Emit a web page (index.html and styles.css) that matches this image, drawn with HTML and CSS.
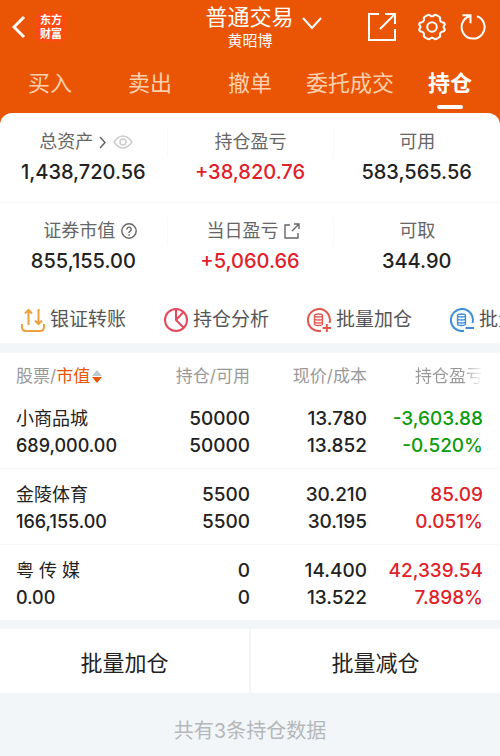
FILE: index.html
```html
<!DOCTYPE html>
<html lang="zh-CN">

<head>
    <meta charset="UTF-8">
    <meta name="viewport" content="width=device-width, initial-scale=1">
    <title>普通交易 - 持仓</title>
    <link rel="stylesheet" href="styles.css">
</head>

<body>
    <header class="header">
        <div class="topbar">
            <div class="topbar-left">
                <button class="icon-btn" aria-label="返回">
                    <svg width="14" height="24" viewBox="0 0 14 24"><path d="M12 2 2 12l10 10" stroke-width="3" /></svg>
                </button>
                <div class="logo">东方<br>财富</div>
            </div>
            <div class="title">
                <button class="title-btn">普通交易
                    <svg width="20" height="13" viewBox="0 0 20 13"><path d="m1 1 9 10 9-10" stroke-width="2" /></svg>
                </button>
                <div class="user">黄昭博</div>
            </div>
            <div class="topbar-right">
                <button class="icon-btn" aria-label="分享">
                    <svg width="28" height="28" viewBox="0 0 28 28"><path d="M11 1H1v26h26V16M17 1h10v10M26 2 12 16" stroke-width="2" /></svg>
                </button>
                <button class="icon-btn gear" aria-label="设置">
                    <svg width="28" height="28" viewBox="0 0 28 28">
                        <path d="M9.5 2.2 Q11 1 12 2.4 Q14 4.2 16 2.4 Q17 1 18.5 2.2 L21 3.6 Q22.6 4.4 22 6.2 Q21.8 8.8 24.8 9.6 Q26.8 9.7 26.8 11.5 L25.4 14 L26.8 16.5 Q26.8 18.3 24.8 18.4 Q21.8 19.2 22 21.8 Q22.6 23.6 21 24.4 L18.5 25.8 Q17 27 16 25.6 Q14 23.8 12 25.6 Q11 27 9.5 25.8 L7 24.4 Q5.4 23.6 6 21.8 Q6.2 19.2 3.2 18.4 Q1.2 18.3 1.2 16.5 L2.6 14 L1.2 11.5 Q1.2 9.7 3.2 9.6 Q6.2 8.8 6 6.2 Q5.4 4.4 7 3.6 Z" stroke-width="2" stroke-linejoin="round" />
                        <circle cx="14" cy="14" r="4.8" stroke-width="2" />
                    </svg>
                </button>
                <button class="icon-btn" aria-label="刷新">
                    <svg width="26" height="28" viewBox="0 0 26 28"><path d="M17 3.300A11.500 11.500 0 1 1 9.500 3.200M2.500 2.200h8v8" stroke-width="2" /></svg>
                </button>
            </div>
        </div>
        <nav class="tabs">
            <a href="#">买入</a>
            <a href="#">卖出</a>
            <a href="#">撤单</a>
            <a href="#">委托成交</a>
            <a href="#" class="active">持仓</a>
        </nav>
    </header>

    <main>
        <section class="account">
            <div class="summary">
                <div class="item">
                    <div class="label with-icon">总资产
                        <svg width="8" height="13" viewBox="0 0 8 13"><path d="m1 1 5 5.5L1 12" stroke-width="1.5" /></svg>
                        <svg class="eye" width="20" height="14" viewBox="0 0 20 14"><path d="M1 7q9-12 18 0-9 12-18 0z" stroke-width="1.5" /><circle cx="10" cy="7" r="3" stroke-width="1.5" /></svg>
                    </div>
                    <div class="value">1,438,720.56</div>
                </div>
                <div class="item">
                    <div class="label">持仓盈亏</div>
                    <div class="value red">+38,820.76</div>
                </div>
                <div class="item">
                    <div class="label">可用</div>
                    <div class="value">583,565.56</div>
                </div>
            </div>
            <div class="summary second">
                <div class="item">
                    <div class="label with-icon market">证券市值
                        <svg width="16" height="16" viewBox="0 0 16 16"><circle cx="8" cy="8" r="7.2" stroke-width="1.4" /><path d="M5.8 6.4a2.2 2.2 0 1 1 3.4 1.8Q8 9 8 10M8 11.3v1.4" stroke-width="1.4" /></svg>
                    </div>
                    <div class="value">855,155.00</div>
                </div>
                <div class="item">
                    <div class="label with-icon">当日盈亏
                        <svg width="16" height="16" viewBox="0 0 16 16"><path d="M6 2H1v13h13v-5M10 1h5v5M15 1 8 8" stroke-width="1.4" /></svg>
                    </div>
                    <div class="value red">+5,060.66</div>
                </div>
                <div class="item">
                    <div class="label">可取</div>
                    <div class="value">344.90</div>
                </div>
            </div>
            <div class="actions">
                <a href="#">
                    <svg class="orange" width="24" height="24" viewBox="0 0 24 24"><path d="M1 16v3q0 4 4 4h14q4 0 4-4v-3M7.500 17V2M4 5.500 7.500 2 11 5.500M17.500 1v15M14 12.500l3.500 3.500 3.500-3.500" /></svg>
                    银证转账
                </a>
                <a href="#">
                    <svg class="pink" width="24" height="24" viewBox="0 0 24 24"><circle cx="12" cy="12" r="11" /><path d="M12 1v11l8 8M12 12l7.500-8" /></svg>
                    持仓分析
                </a>
                <a href="#">
                    <svg class="coral" width="24" height="24" viewBox="0 0 24 24"><path d="M14 22.800A11 11 0 1 1 22.500 15M15.500 20H24M19.800 16v8" /><path d="M7.500 7.500q0-1.500 4-1.500t4 1.500v8.500q0 1.500-4 1.500t-4-1.500zM7.500 7.500q0 1.500 4 1.500t4-1.500M7.500 10.500q0 1.500 4 1.500t4-1.500M7.500 13.500q0 1.500 4 1.500t4-1.500" stroke-width="1.3" /></svg>
                    批量加仓
                </a>
                <a href="#">
                    <svg class="blue" width="24" height="24" viewBox="0 0 24 24"><path d="M14 22.800A11 11 0 1 1 22.500 15M15.500 20H24" /><path d="M7.500 7.500q0-1.500 4-1.500t4 1.500v8.500q0 1.500-4 1.500t-4-1.500zM7.500 7.500q0 1.500 4 1.500t4-1.500M7.500 10.500q0 1.500 4 1.500t4-1.500M7.500 13.500q0 1.500 4 1.500t4-1.500" stroke-width="1.3" /></svg>
                    批量减仓
                </a>
            </div>
        </section>

        <section class="positions">
            <table>
                <thead>
                    <tr>
                        <th>股票/<span class="sorted">市值</span><svg class="sort" width="10" height="14" viewBox="0 0 10 14"><path d="M5 0l5 6H0z" fill="#b9cbd0" /><path d="M0 7h10l-5 6z" fill="#ea5504" /></svg></th>
                        <th>持仓/可用</th>
                        <th class="price">现价/成本</th>
                        <th><span class="fade">持仓盈亏</span></th>
                    </tr>
                </thead>
                <tbody>
                    <tr>
                        <td><span class="name">小商品城</span><br>689,000.00</td>
                        <td>50000<br>50000</td>
                        <td class="price">13.780<br>13.852</td>
                        <td class="green">-3,603.88<br>-0.520%</td>
                    </tr>
                    <tr>
                        <td><span class="name">金陵体育</span><br>166,155.00</td>
                        <td>5500<br>5500</td>
                        <td class="price">30.210<br>30.195</td>
                        <td class="red">85.09<br>0.051%</td>
                    </tr>
                    <tr>
                        <td><span class="name">粤 传 媒</span><br>0.00</td>
                        <td>0<br>0</td>
                        <td class="price">14.400<br>13.522</td>
                        <td class="red">42,339.54<br>7.898%</td>
                    </tr>
                </tbody>
            </table>
        </section>

        <div class="batch">
            <button>批量加仓</button>
            <button>批量减仓</button>
        </div>
    </main>

    <footer>共有3条持仓数据</footer>
</body>

</html>
```
FILE: styles.css
```css
* {
    box-sizing: border-box;
}

body {
    margin: 0;
    font-family: Inter, "Noto Sans CJK SC", sans-serif;
    color: #222;
    background-color: #f3f6f8;
    overflow-x: hidden;
}

a {
    color: inherit;
    text-decoration: none;
}

button {
    font-family: inherit;
    color: inherit;
    background: none;
    border: none;
    padding: 0;
    cursor: pointer;
}

svg {
    fill: none;
    stroke: currentColor;
    flex-shrink: 0;
}

.header {
    background-color: #e95504;
    color: #fff;
    padding-bottom: 16px;
    margin-bottom: -12px;
}

.topbar {
    display: grid;
    grid-template-columns: 1fr auto 1fr;
    align-items: center;
    height: 54px;
    padding: 0 14px 0 12px;
}

.topbar-left,
.topbar-right {
    display: flex;
    align-items: center;
}

.topbar-left {
    gap: 10px;
}

.topbar-right {
    justify-content: flex-end;
    gap: 14px;
}

.gear {
    margin-left: 8px;
}

.icon-btn {
    display: flex;
}

.logo {
    width: 30px;
    height: 30px;
    padding-top: 1px;
    border-radius: 6px;
    background-color: #fb4a12;
    font-size: 11px;
    font-weight: bold;
    line-height: 14px;
    text-align: center;
}

.title {
    display: flex;
    flex-direction: column;
    align-items: center;
    padding-left: 2px;
}

.title-btn {
    display: flex;
    align-items: center;
    gap: 8px;
    margin-left: 27px;
    font-size: 22px;
    line-height: 28px;
}

.title-btn svg {
    margin-top: 12px;
}

.user {
    font-size: 15px;
    line-height: 20px;
}

.tabs {
    display: grid;
    grid-template-columns: repeat(5, 1fr);
    text-align: center;
    font-size: 22px;
    line-height: 32px;
    padding-top: 13px;
}

.tabs a {
    color: #ffd0b0;
    height: 42px;
}

.tabs .active {
    color: #fff;
    font-weight: bold;
}

.tabs .active::after {
    content: "";
    display: block;
    width: 26px;
    height: 4px;
    margin: 6px auto 0;
    border-radius: 2px;
    background-color: #fff;
}

.account {
    position: relative;
    background-color: #fff;
    border-radius: 12px 12px 0 0;
    padding-top: 15px;
}

.summary {
    display: grid;
    grid-template-columns: repeat(3, 1fr);
    text-align: center;
    padding-bottom: 14px;
    border-bottom: 1px solid #f7f8f8;
}

.summary.second {
    padding: 14px 0 0;
    border-bottom: none;
}

.label {
    display: flex;
    justify-content: center;
    align-items: center;
    gap: 6px;
    font-size: 18px;
    line-height: 28px;
    color: #666;
}

.label.with-icon {
    padding-left: 6px;
}

.label.market {
    padding-left: 14px;
}

.item + .item .label {
    border-left: 1px solid #fafafa;
}

.eye {
    color: #ccc;
}

.value {
    font-size: 20px;
    font-weight: 500;
    line-height: 32px;
}

.red {
    color: #e0202a;
}

.green {
    color: #0c9b0c;
}

.actions {
    display: flex;
    gap: 38px;
    padding: 28px 0 8px 21px;
    overflow: hidden;
}

.actions a {
    display: flex;
    align-items: center;
    gap: 5px;
    font-size: 19px;
    line-height: 30px;
    color: #555;
    white-space: nowrap;
}

.actions svg {
    stroke-width: 2;
}

.orange {
    color: #eba140;
}

.pink {
    color: #e34a5c;
}

.coral {
    color: #e4574f;
}

.blue {
    color: #3d8ddb;
}

.positions {
    margin: 10px 0 9px;
    background-color: #fff;
}

table {
    width: 100%;
    table-layout: fixed;
    border-collapse: collapse;
}

th {
    width: 23%;
    padding: 10px 0 4px;
    font-size: 17px;
    font-weight: normal;
    line-height: 26px;
    color: #999;
    text-align: right;
    white-space: nowrap;
}

th.price {
    width: 24%;
}

.price {
    padding-right: 3px;
}

td {
    padding: 12px 0 9px;
    font-size: 19px;
    font-weight: 500;
    line-height: 27px;
    text-align: right;
}

th:first-child {
    width: 27%;
}

th:first-child,
td:first-child {
    padding-left: 16px;
    font-size: 17px;
    text-align: left;
}

td:first-child {
    font-size: 18px;
}

th:last-child {
    width: 26%;
}

th:last-child,
td:last-child {
    padding-right: 17px;
}

tbody tr + tr {
    border-top: 1px solid #f3f5f6;
}

.name {
    font-size: 18px;
    font-weight: normal;
}

.sorted {
    color: #ea5504;
}

.sort {
    stroke: none;
    vertical-align: -2px;
    margin-left: 2px;
}

.fade {
    color: transparent;
    background: linear-gradient(to right, #999 70%, #fff);
    background-clip: text;
}

.batch {
    display: grid;
    grid-template-columns: 1fr 1fr;
    gap: 2px;
}

.batch button {
    height: 64px;
    background-color: #fff;
    font-size: 22px;
}

footer {
    padding: 23px 0 10px;
    font-size: 20px;
    line-height: 30px;
    text-align: center;
    color: #b5b8ba;
}
```
